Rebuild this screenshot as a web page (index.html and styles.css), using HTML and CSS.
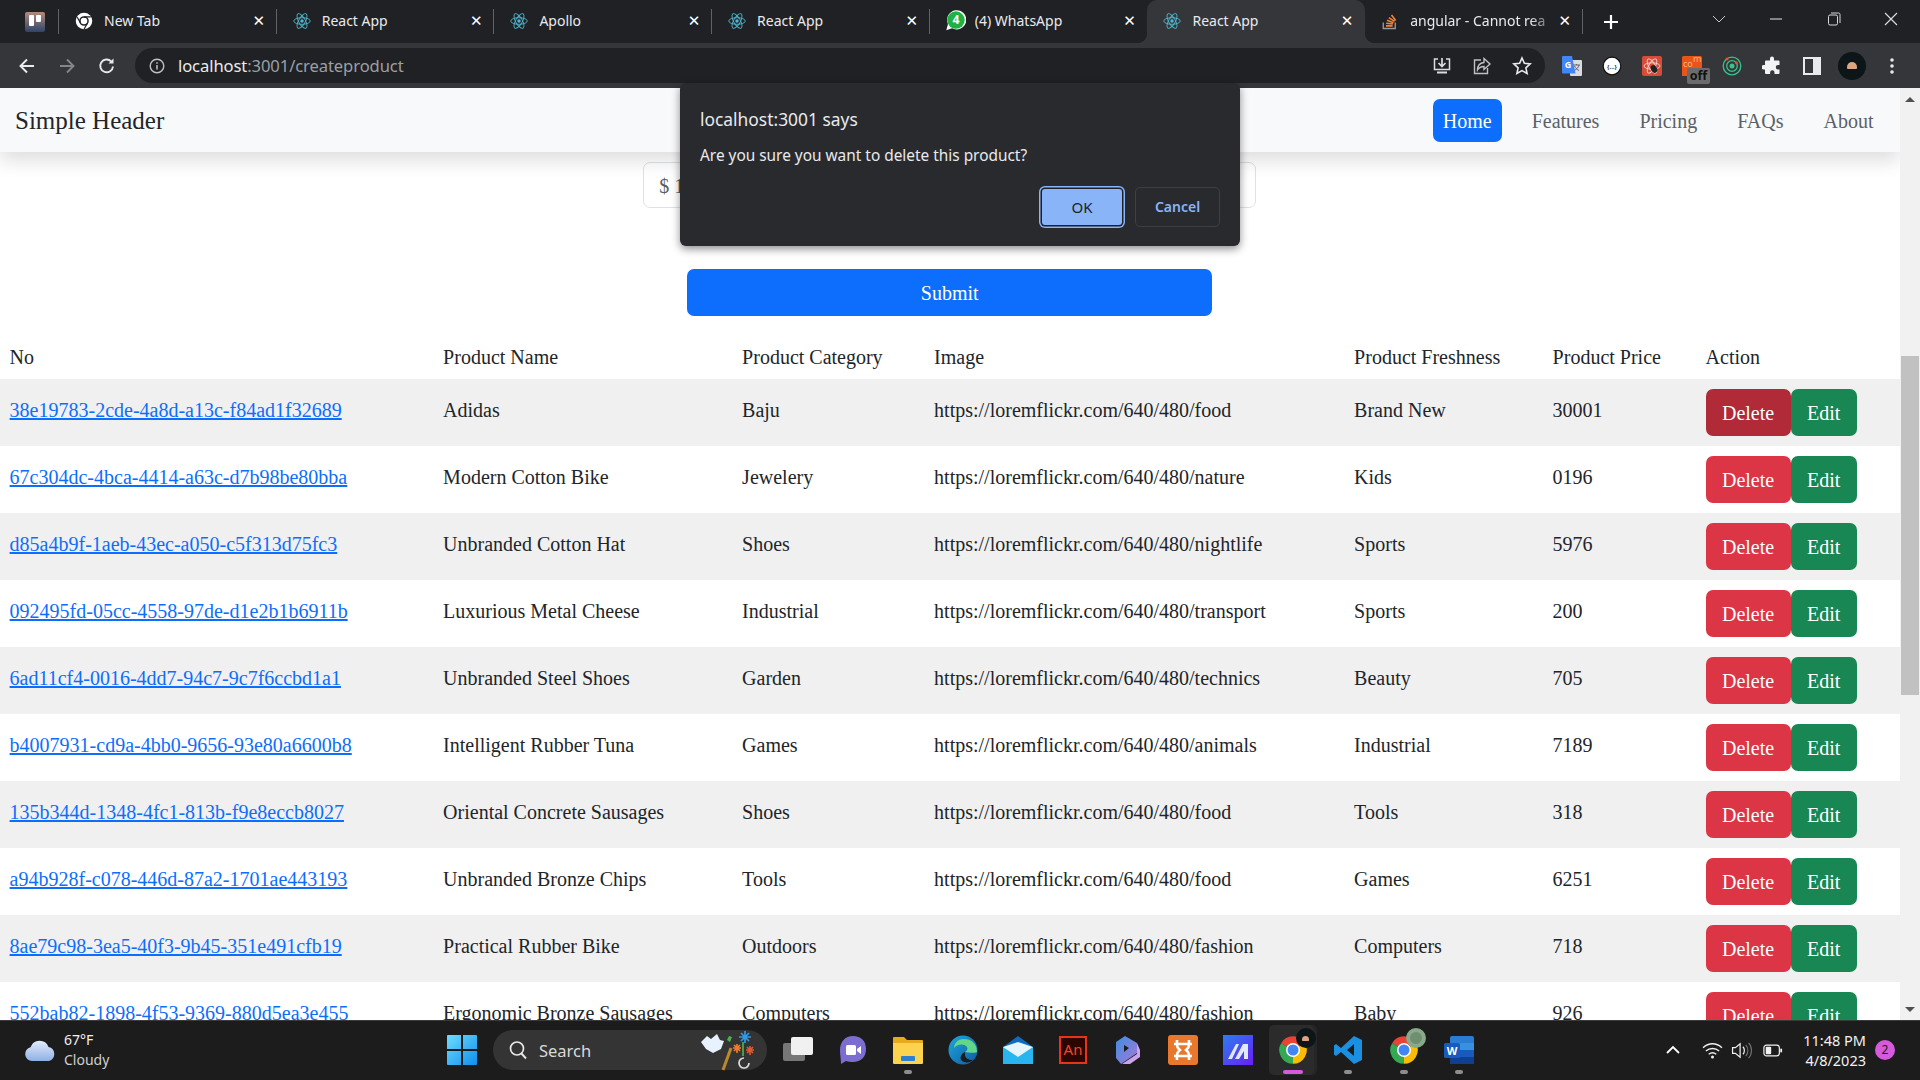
FILE: index.html
```html
<!DOCTYPE html>
<html lang="en">
<head>
<meta charset="utf-8">
<title>React App</title>
<link rel="stylesheet" href="styles.css">
</head>
<body>
<svg class="defs" width="0" height="0" aria-hidden="true">
  <defs>
    <symbol id="react" viewBox="0 0 24 24">
      <circle cx="12" cy="12" r="2.3" fill="#4fb6cf"/>
      <g fill="none" stroke="#4fb6cf" stroke-width="1.2">
        <ellipse cx="12" cy="12" rx="11" ry="4.4"/>
        <ellipse cx="12" cy="12" rx="11" ry="4.4" transform="rotate(60 12 12)"/>
        <ellipse cx="12" cy="12" rx="11" ry="4.4" transform="rotate(120 12 12)"/>
      </g>
    </symbol>
    <symbol id="chrome" viewBox="0 0 24 24">
      <path d="M12 12 21.53 6.5A11 11 0 0 0 2.47 6.5Z" fill="#ea4335"/>
      <path d="M12 12 2.47 6.5A11 11 0 0 0 12 23Z" fill="#34a853"/>
      <path d="M12 12 12 23A11 11 0 0 0 21.53 6.5Z" fill="#fbbc04"/>
      <circle cx="12" cy="12" r="5.6" fill="#fff"/>
      <circle cx="12" cy="12" r="4.4" fill="#4285f4"/>
    </symbol>
  </defs>
</svg>

<header class="tabstrip">
  <div class="tab-pin">
    <svg class="ic20" viewBox="0 0 20 20"><defs><linearGradient id="pin" x1="0" y1="0" x2="0" y2="1"><stop offset="0" stop-color="#b58a7c"/><stop offset="1" stop-color="#2f4468"/></linearGradient></defs><rect width="20" height="20" rx="2" fill="url(#pin)"/><rect x="4" y="3" width="5" height="11" rx="1" fill="#fff"/><rect x="11" y="3" width="5" height="7" rx="1" fill="#fff"/></svg>
  </div>
  <div class="tab">
    <svg class="tab-icon" viewBox="0 0 24 24"><circle cx="12" cy="12" r="11" fill="#fff"/><circle cx="12" cy="12" r="5.4" fill="none" stroke="#202124" stroke-width="2"/><path d="M12 6.6h9M7.3 14.7 3 7M16.7 14.7 12 23" stroke="#202124" stroke-width="1.6"/></svg>
    <span class="tab-title">New Tab</span><span class="tab-x">✕</span>
  </div>
  <div class="tab">
    <svg class="tab-icon"><use href="#react"/></svg>
    <span class="tab-title">React App</span><span class="tab-x">✕</span>
  </div>
  <div class="tab">
    <svg class="tab-icon"><use href="#react"/></svg>
    <span class="tab-title">Apollo</span><span class="tab-x">✕</span>
  </div>
  <div class="tab">
    <svg class="tab-icon"><use href="#react"/></svg>
    <span class="tab-title">React App</span><span class="tab-x">✕</span>
  </div>
  <div class="tab tab-before-active">
    <svg class="tab-icon tab-icon-wa" viewBox="0 0 24 24"><path d="M1.5 23 3.4 16A11 11 0 1 1 8 20.9Z" fill="#fff"/><circle cx="12.5" cy="11.5" r="10" fill="#1fb141"/><text class="wa-count" x="12.5" y="16.5" text-anchor="middle">4</text></svg>
    <span class="tab-title">(4) WhatsApp</span><span class="tab-x">✕</span>
  </div>
  <div class="tab tab-active">
    <svg class="tab-icon"><use href="#react"/></svg>
    <span class="tab-title">React App</span><span class="tab-x">✕</span>
  </div>
  <div class="tab tab-last">
    <svg class="tab-icon" viewBox="0 0 24 24"><path d="M3 14v8h16v-8" fill="none" stroke="#9a9a9a" stroke-width="1.8"/><path d="M6.5 18.5h9M6.8 15l9 1M8 11l8.6 3.2M10.5 7.5l7.5 5M14 4l5.6 7.2" stroke="#ef8236" stroke-width="2.2" fill="none"/></svg>
    <span class="tab-title tab-fade">angular - Cannot rea</span><span class="tab-x">✕</span>
  </div>
  <div class="newtab">
    <svg class="ic16" viewBox="0 0 16 16"><path d="M8 1v14M1 8h14" stroke="#fff" stroke-width="2.2"/></svg>
  </div>
  <div class="winctl">
    <svg class="ctl" viewBox="0 0 14 14"><path d="M1 4l6 6 6-6" fill="none" stroke="#c8c8c8" stroke-width="1"/></svg>
    <svg class="ctl" viewBox="0 0 14 14"><path d="M1 7h12" stroke="#d8d8d8" stroke-width="1.1"/></svg>
    <svg class="ctl" viewBox="0 0 14 14"><rect x="1.5" y="3" width="9" height="10" rx="1.5" fill="none" stroke="#d8d8d8"/><path d="M4 1h7.5A1.5 1.5 0 0 1 13 2.5V11" fill="none" stroke="#d8d8d8"/></svg>
    <svg class="ctl" viewBox="0 0 14 14"><path d="M1 1l12 12M13 1 1 13" stroke="#e0e0e0" stroke-width="1.1"/></svg>
  </div>
</header>

<nav class="toolbar">
  <div class="navbtns">
    <span class="tbtn"><svg class="ic20" viewBox="0 0 20 20"><path d="M17 10H4M10 3.5 3.5 10l6.5 6.5" fill="none" stroke="#e8eaed" stroke-width="1.9"/></svg></span>
    <span class="tbtn"><svg class="ic20" viewBox="0 0 20 20"><path d="M3 10h13M10 3.5l6.5 6.5-6.5 6.5" fill="none" stroke="#84868a" stroke-width="1.9"/></svg></span>
    <span class="tbtn"><svg class="ic20" viewBox="0 0 20 20"><path d="M16 10.5A6.4 6.4 0 1 1 14.2 5.400" fill="none" stroke="#e8eaed" stroke-width="1.9"/><path d="M16.500 2.500v5h-5Z" fill="#e8eaed"/></svg></span>
  </div>
  <div class="omnibox">
    <svg class="ic16" viewBox="0 0 16 16"><circle cx="8" cy="8" r="6.800" fill="none" stroke="#bdc1c6" stroke-width="1.400"/><path d="M8 7v4.500M8 4.300v1.500" stroke="#bdc1c6" stroke-width="1.500"/></svg>
    <span class="url"><span class="url-host">localhost</span>:3001/createproduct</span>
    <span class="omni-actions">
      <span class="tbtn"><svg class="ic20" viewBox="0 0 20 20"><path d="M6 3H2.500v10.500h15V3H14" fill="none" stroke="#dadce0" stroke-width="1.500"/><path d="M10 2v8M6.500 7l3.500 3.500L13.500 7" fill="none" stroke="#dadce0" stroke-width="1.700"/><path d="M5 16.500h10" stroke="#dadce0" stroke-width="2"/></svg></span>
      <span class="tbtn"><svg class="ic20" viewBox="0 0 20 20"><path d="M9 4H2.500v13.500h13V12" fill="none" stroke="#bdc1c6" stroke-width="1.400"/><path d="M12 2.500 18 8l-6 5.500V10.500c-3 0-5 1-6.500 3.500 0-4 2.500-7 6.500-7.500Z" fill="none" stroke="#bdc1c6" stroke-width="1.400"/></svg></span>
      <span class="tbtn"><svg class="ic20" viewBox="0 0 20 20"><path d="M10 2l2.400 5.300 5.800.6-4.300 3.900 1.200 5.700L10 14.600 4.900 17.500l1.200-5.700L1.800 7.900l5.800-.6Z" fill="none" stroke="#e8eaed" stroke-width="1.600"/></svg></span>
    </span>
  </div>
  <div class="extensions">
    <span class="tbtn"><svg class="ic20" viewBox="0 0 20 20"><rect x="8" y="4" width="12" height="16" rx="1" fill="#dadce0"/><path d="M11 9h7M14.500 8v1M17 9c-.5 2.500-2.500 4.500-5 5.500M12.500 10c1 2 2.500 3.500 4.500 4.500" stroke="#5f6368" fill="none"/><path d="M0 1a1 1 0 0 1 1-1h9l3.500 17.500H1a1 1 0 0 1-1-1Z" fill="#4285f4"/><text class="gt" x="6" y="11.500" text-anchor="middle">G</text></svg></span>
    <span class="tbtn"><svg class="ic20" viewBox="0 0 20 20"><circle cx="10" cy="10" r="8.800" fill="#fff" stroke="#111" stroke-width="1.200"/><text class="curl" x="10" y="12.500" text-anchor="middle">{...}</text></svg></span>
    <span class="tbtn"><svg class="ic20" viewBox="0 0 20 20"><rect width="20" height="20" rx="2" fill="#d64c38"/><g fill="none" stroke="#f6d5cf" stroke-width=".9"><ellipse cx="10" cy="10" rx="8" ry="3.200"/><ellipse cx="10" cy="10" rx="8" ry="3.200" transform="rotate(60 10 10)"/><ellipse cx="10" cy="10" rx="8" ry="3.200" transform="rotate(120 10 10)"/></g><ellipse cx="12" cy="13" rx="3" ry="4" fill="#222" transform="rotate(-30 12 13)"/></svg></span>
    <span class="tbtn ext-com"><svg class="ic20" viewBox="0 0 20 20"><rect width="20" height="21" rx="1.500" fill="#e8541a"/><text class="comtxt" x="1" y="11">co</text><text class="comtxt" x="11" y="6">m</text></svg><span class="off-badge">off</span></span>
    <span class="tbtn"><svg class="ic20" viewBox="0 0 20 20"><circle cx="10" cy="10" r="8.800" fill="none" stroke="#35c48d" stroke-width="1.300"/><circle cx="10" cy="10" r="5.300" fill="none" stroke="#35c48d" stroke-width="1.300"/><circle cx="10" cy="10" r="2.500" fill="#35c48d"/><circle cx="5" cy="3" r="1.500" fill="#e8541a"/><circle cx="14.500" cy="7" r="1.400" fill="#e8541a"/></svg></span>
    <span class="tbtn"><svg class="ic20" viewBox="0 0 20 20"><path d="M8 2.500a2 2 0 0 1 4 0V4.500h4.500a1 1 0 0 1 1 1V9h-1.500a2.200 2.200 0 0 0 0 4.400h1.500v3.600a1 1 0 0 1-1 1H12.500v-1.500a2.200 2.200 0 0 0-4.400 0V18H4a1 1 0 0 1-1-1v-3.500H1.500a2.200 2.200 0 0 1 0-4.400H3V5.500a1 1 0 0 1 1-1h4Z" fill="#f1f3f4"/></svg></span>
    <span class="tbtn"><svg class="ic20" viewBox="0 0 20 20"><rect x="2" y="2" width="16" height="16" fill="none" stroke="#e8eaed" stroke-width="2"/><rect x="11" y="2" width="7" height="16" fill="#e8eaed"/></svg></span>
    <span class="tbtn"><span class="avatar"><span class="avatar-face"></span></span></span>
    <span class="tbtn"><svg class="ic20" viewBox="0 0 20 20"><circle cx="10" cy="4" r="1.800" fill="#e8eaed"/><circle cx="10" cy="10" r="1.800" fill="#e8eaed"/><circle cx="10" cy="16" r="1.800" fill="#e8eaed"/></svg></span>
  </div>
</nav>

<main class="viewport">
  <div class="page">
    <div class="site-header">
      <span class="brand">Simple Header</span>
      <ul class="pills">
        <li class="pill pill-on">Home</li>
        <li class="pill">Features</li>
        <li class="pill">Pricing</li>
        <li class="pill">FAQs</li>
        <li class="pill">About</li>
      </ul>
    </div>
    <form class="product-form">
      <div class="price-input">$ 10000</div>
      <div class="submit-btn">Submit</div>
    </form>
    <table class="products">
      <colgroup>
        <col class="c-no"><col class="c-name"><col class="c-cat"><col class="c-img"><col class="c-fresh"><col class="c-price"><col class="c-act">
      </colgroup>
      <thead>
        <tr><th>No</th><th>Product Name</th><th>Product Category</th><th>Image</th><th>Product Freshness</th><th>Product Price</th><th>Action</th></tr>
      </thead>
      <tbody>
        <tr><td><a href="#">38e19783-2cde-4a8d-a13c-f84ad1f32689</a></td><td>Adidas</td><td>Baju</td><td>https://loremflickr.com/640/480/food</td><td>Brand New</td><td>30001</td><td class="acts"><span class="btn del del-hover">Delete</span><span class="btn edit">Edit</span></td></tr>
        <tr><td><a href="#">67c304dc-4bca-4414-a63c-d7b98be80bba</a></td><td>Modern Cotton Bike</td><td>Jewelery</td><td>https://loremflickr.com/640/480/nature</td><td>Kids</td><td>0196</td><td class="acts"><span class="btn del">Delete</span><span class="btn edit">Edit</span></td></tr>
        <tr><td><a href="#">d85a4b9f-1aeb-43ec-a050-c5f313d75fc3</a></td><td>Unbranded Cotton Hat</td><td>Shoes</td><td>https://loremflickr.com/640/480/nightlife</td><td>Sports</td><td>5976</td><td class="acts"><span class="btn del">Delete</span><span class="btn edit">Edit</span></td></tr>
        <tr><td><a href="#">092495fd-05cc-4558-97de-d1e2b1b6911b</a></td><td>Luxurious Metal Cheese</td><td>Industrial</td><td>https://loremflickr.com/640/480/transport</td><td>Sports</td><td>200</td><td class="acts"><span class="btn del">Delete</span><span class="btn edit">Edit</span></td></tr>
        <tr><td><a href="#">6ad11cf4-0016-4dd7-94c7-9c7f6ccbd1a1</a></td><td>Unbranded Steel Shoes</td><td>Garden</td><td>https://loremflickr.com/640/480/technics</td><td>Beauty</td><td>705</td><td class="acts"><span class="btn del">Delete</span><span class="btn edit">Edit</span></td></tr>
        <tr><td><a href="#">b4007931-cd9a-4bb0-9656-93e80a6600b8</a></td><td>Intelligent Rubber Tuna</td><td>Games</td><td>https://loremflickr.com/640/480/animals</td><td>Industrial</td><td>7189</td><td class="acts"><span class="btn del">Delete</span><span class="btn edit">Edit</span></td></tr>
        <tr><td><a href="#">135b344d-1348-4fc1-813b-f9e8eccb8027</a></td><td>Oriental Concrete Sausages</td><td>Shoes</td><td>https://loremflickr.com/640/480/food</td><td>Tools</td><td>318</td><td class="acts"><span class="btn del">Delete</span><span class="btn edit">Edit</span></td></tr>
        <tr><td><a href="#">a94b928f-c078-446d-87a2-1701ae443193</a></td><td>Unbranded Bronze Chips</td><td>Tools</td><td>https://loremflickr.com/640/480/food</td><td>Games</td><td>6251</td><td class="acts"><span class="btn del">Delete</span><span class="btn edit">Edit</span></td></tr>
        <tr><td><a href="#">8ae79c98-3ea5-40f3-9b45-351e491cfb19</a></td><td>Practical Rubber Bike</td><td>Outdoors</td><td>https://loremflickr.com/640/480/fashion</td><td>Computers</td><td>718</td><td class="acts"><span class="btn del">Delete</span><span class="btn edit">Edit</span></td></tr>
        <tr><td><a href="#">552bab82-1898-4f53-9369-880d5ea3e455</a></td><td>Ergonomic Bronze Sausages</td><td>Computers</td><td>https://loremflickr.com/640/480/fashion</td><td>Baby</td><td>926</td><td class="acts"><span class="btn del">Delete</span><span class="btn edit">Edit</span></td></tr>
      </tbody>
    </table>
  </div>
  <aside class="scrollbar">
    <span class="sb-up"></span>
    <span class="sb-track"><span class="sb-thumb"></span></span>
    <span class="sb-down"></span>
  </aside>
</main>

<footer class="taskbar">
  <div class="weather">
    <svg class="cloud" viewBox="0 0 32 24"><defs><linearGradient id="cl" x1="0" y1="0" x2="0" y2="1"><stop offset="0" stop-color="#e4ecfa"/><stop offset="1" stop-color="#8fb0e6"/></linearGradient></defs><path d="M8 23a7 7 0 0 1-1.500-13.800A9.500 9.500 0 0 1 24.500 9 7.200 7.200 0 0 1 25 23Z" fill="url(#cl)"/></svg>
    <div class="weather-text"><span class="temp">67°F</span><span class="cond">Cloudy</span></div>
  </div>
  <svg class="winlogo" viewBox="0 0 30 30"><defs><linearGradient id="win" x1="0" y1="0" x2="1" y2="1"><stop offset="0" stop-color="#6fdcff"/><stop offset="1" stop-color="#0f8fec"/></linearGradient></defs><path d="M0 1a1 1 0 0 1 1-1h13v14H0ZM16 0h13a1 1 0 0 1 1 1v13H16ZM0 16h14v14H1a1 1 0 0 1-1-1ZM16 16h14v13a1 1 0 0 1-1 1H16Z" fill="url(#win)"/></svg>
  <div class="search">
    <svg class="ic20" viewBox="0 0 20 20"><circle cx="9" cy="8.500" r="6.500" fill="none" stroke="#e8e8e8" stroke-width="1.700"/><path d="M13.500 13.500 18 18.500" stroke="#e8e8e8" stroke-width="1.900"/></svg>
    <span class="search-label">Search</span>
    <svg class="doodle" viewBox="0 0 58 44"><path d="M2 14 8 8l4 3 6-5 3 6 4 1-3 8-8 4-7-4Z" fill="#e8f2ff"/><path d="M32 20 24 42" stroke="#b98a2c" stroke-width="3"/><path d="M28 12l2-4 3 1-2 5Z" fill="#4caf50"/><g stroke-width="1.700" fill="none"><path d="M46 3v12M40 9h12M42 5l8 8M50 5l-8 8" stroke="#2f9be6"/><path d="M38 16v9M34 20h8M35 17l6 6M41 17l-6 6" stroke="#f07b2c"/><path d="M51 18v9M47 22h8M48 19l6 6M54 19l-6 6" stroke="#e2562f"/><path d="M44 14v14" stroke="#4caf50"/></g><path d="M50 35a5 5 0 1 1-5-5" fill="none" stroke="#ddd" stroke-width="1.700"/></svg>
  </div>
  <div class="apps">
    <span class="app"><svg class="ic30" viewBox="0 0 30 30"><rect x="0" y="8" width="22" height="18" rx="2" fill="#777"/><rect x="8" y="2" width="22" height="18" rx="2" fill="#f1f1f1"/></svg></span>
    <span class="app"><svg class="ic30" viewBox="0 0 30 30"><path d="M15 1C7 1 2 7 2 15c0 5 1 9 1 14l5-3c2 .8 4 1 7 1 8 0 13-5 13-13S23 1 15 1Z" fill="#7c6dd0"/><rect x="8" y="10" width="10" height="10" rx="1.500" fill="#fff"/><path d="M19 14l4-3v8l-4-3Z" fill="#fff"/></svg></span>
    <span class="app"><svg class="ic30" viewBox="0 0 30 30"><path d="M0 3a1 1 0 0 1 1-1h10l3 3h15a1 1 0 0 1 1 1v4H0Z" fill="#e8a91f"/><path d="M0 8h30v20a1 1 0 0 1-1 1H1a1 1 0 0 1-1-1Z" fill="#fcd34f"/><rect x="8" y="21" width="14" height="5" rx="1" fill="#2b7ed1"/></svg><i class="dot"></i></span>
    <span class="app"><svg class="ic30" viewBox="0 0 30 30"><defs><linearGradient id="edge" x1="0" y1="0" x2="1" y2="1"><stop offset="0" stop-color="#1ea8d8"/><stop offset="1" stop-color="#0f5aa8"/></linearGradient></defs><circle cx="15" cy="15" r="14.500" fill="url(#edge)"/><path d="M29 17C29 8 23 4 16 4 9 4 6 9 6 13c3-4 10-5 13-1 1 2 0 4-2 5 4 1 12 1 12 0Z" fill="#62d68a"/><path d="M17 17c-4 2-6 6-3 9 3 2 8 2 11-1-4 0-9-1-8-8Z" fill="#1c1c1c"/></svg></span>
    <span class="app"><svg class="ic30" viewBox="0 0 30 30"><path d="M0 12 15 1l15 11v17H0Z" fill="#0f6cbd"/><path d="M0 12h30v17H0Z" fill="#29b6f0"/><path d="M0 12l15 10 15-10-15-5Z" fill="#e8f4fb"/></svg></span>
    <span class="app"><span class="an-tile">An</span></span>
    <span class="app"><svg class="ic30" viewBox="0 0 30 30"><defs><linearGradient id="bing" x1="0" y1="0" x2="1" y2="1"><stop offset="0" stop-color="#3d8fe0"/><stop offset="1" stop-color="#a678d8"/></linearGradient></defs><path d="M12 1l12 7v10L8 29l-5-6V7Z" fill="url(#bing)"/><path d="M11 10l5 3-5 4Z" fill="#1c1c1c"/><path d="M24 8l3 7v7l-10 7H9l15-10Z" fill="#c9a5ec"/></svg></span>
    <span class="app"><svg class="ic30" viewBox="0 0 30 30"><rect width="30" height="30" rx="3" fill="#e8782c"/><path d="M9 5v5c0 3 2 4 3 5-1 1-3 2-3 5v5M21 5v5c0 3-2 4-3 5 1 1 3 2 3 5v5M6 9h18M6 21h18" fill="none" stroke="#fff" stroke-width="2.600"/></svg></span>
    <span class="app"><svg class="ic30" viewBox="0 0 30 30"><defs><linearGradient id="mm" x1="0" y1="0" x2="1" y2="1"><stop offset="0" stop-color="#2a7ff0"/><stop offset="1" stop-color="#6a1df5"/></linearGradient></defs><rect width="30" height="30" fill="url(#mm)"/><path d="M5 24 13 9h3L9 24ZM12 24 20 9h5v15h-4v-8l-5 8Z" fill="#dfe9ff"/></svg></span>
    <span class="app app-on"><svg class="ic30 app-svg" viewBox="0 0 24 24"><use href="#chrome"/></svg><span class="mini-avatar"><span class="avatar-face mini-face"></span></span><i class="dot dot-on"></i></span>
    <span class="app"><svg class="ic30" viewBox="0 0 30 30"><path d="M21 1 29 5v20l-8 4L8 17l-5 4-2-1.500V10.500L3 9l5 4ZM21 9l-7 6 7 6Z" fill="#1b8fe0" fill-rule="evenodd"/></svg><i class="dot"></i></span>
    <span class="app"><svg class="ic30" viewBox="0 0 24 24"><use href="#chrome"/></svg><span class="mini-avatar mini-green"></span><i class="dot"></i></span>
    <span class="app"><svg class="ic30" viewBox="0 0 30 30"><rect x="6" y="1" width="24" height="28" rx="2" fill="#2b7cd3"/><rect x="6" y="8" width="24" height="7" fill="#41a5ee" opacity=".5"/><rect x="6" y="15" width="24" height="7" fill="#185abd"/><rect x="6" y="22" width="24" height="7" fill="#103f91"/><rect x="0" y="8" width="16" height="15" rx="1.500" fill="#185abd"/><text class="wordw" x="8" y="20" text-anchor="middle">W</text></svg><i class="dot"></i></span>
  </div>
  <div class="tray">
    <svg class="ic16" viewBox="0 0 16 16"><path d="M2 11l6-6 6 6" fill="none" stroke="#fff" stroke-width="1.800"/></svg>
    <svg class="tray-wifi" viewBox="0 0 22 18"><path d="M1 6c6-5.500 14-5.500 20 0M4 9.500c4-3.500 10-3.500 14 0M7 13c2.500-2 5.500-2 8 0" fill="none" stroke="#f0f0f0" stroke-width="1.500"/><circle cx="11" cy="16" r="1.600" fill="#f0f0f0"/></svg>
    <svg class="tray-vol" viewBox="0 0 22 18"><path d="M1 6h3l5-4v14l-5-4H1Z" fill="none" stroke="#f0f0f0" stroke-width="1.300"/><path d="M12 5c2 2 2 6 0 8" fill="none" stroke="#f0f0f0" stroke-width="1.300"/><path d="M15 3c3 3 3 9 0 12M18 1c4 4 4 12 0 16" fill="none" stroke="#777" stroke-width="1.100"/></svg>
    <svg class="tray-bat" viewBox="0 0 22 14"><rect x="1" y="1" width="17" height="12" rx="3" fill="none" stroke="#f0f0f0" stroke-width="1.300"/><rect x="3" y="3" width="6" height="8" rx="1" fill="#f0f0f0"/><rect x="19" y="5" width="2" height="4" fill="#f0f0f0"/></svg>
    <div class="clock"><span>11:48 PM</span><span>4/8/2023</span></div>
    <span class="notif">2</span>
  </div>
</footer>

<div class="alert" role="dialog">
  <div class="alert-title">localhost:3001 says</div>
  <div class="alert-msg">Are you sure you want to delete this product?</div>
  <div class="alert-actions">
    <span class="alert-ok">OK</span>
    <span class="alert-cancel">Cancel</span>
  </div>
</div>
</body>
</html>
```
FILE: styles.css
```css
* { box-sizing: border-box; }
html, body { margin: 0; padding: 0; }
body {
  width: 1920px;
  height: 1080px;
  overflow: hidden;
  display: flex;
  flex-direction: column;
  position: relative;
  font-family: "Liberation Serif", serif;
  color: #212529;
  background: #fff;
}
.defs { position: absolute; }
svg { display: block; flex: none; }
.ic16 { width: 16px; height: 16px; }
.ic20 { width: 20px; height: 20px; }
.ic30 { width: 30px; height: 30px; }

/* tab strip */
.tabstrip {
  height: 43px;
  flex: none;
  display: flex;
  align-items: stretch;
  background: #202124;
  font-family: "Noto Sans", sans-serif;
  font-size: 14px;
  color: #e8eaed;
}
.tab-pin {
  width: 59px;
  display: flex;
  align-items: center;
  padding-left: 25px;
  margin: 9px 0;
  border-right: 1px solid #5f6368;
}
.tab {
  width: 217.7px;
  display: flex;
  align-items: center;
  padding: 0 10px 2px 16px;
  position: relative;
  flex: none;
}
.tab::after {
  content: "";
  position: absolute;
  right: 0;
  top: 9px;
  bottom: 9px;
  width: 1px;
  background: #5f6368;
}
.tab-before-active::after, .tab-active::after { display: none; }
.tab-icon { width: 18px; height: 18px; margin-right: 11px; }
.tab-icon-wa { width: 21px; height: 21px; margin: 0 9px 0 -1px; }
.tab-title { flex: 1; white-space: nowrap; overflow: hidden; }
.tab-fade { -webkit-mask-image: linear-gradient(90deg, #000 82%, transparent 100%); mask-image: linear-gradient(90deg, #000 82%, transparent 100%); }
.tab-x { width: 16px; text-align: center; font-size: 15px; color: #fff; font-family: "DejaVu Sans", sans-serif; font-weight: 700; }
.tab-active {
  background: #35363a;
  border-radius: 10px 10px 0 0;
  margin-top: 0;
}
.tab-active::before {
  content: "";
  position: absolute;
  left: -10px;
  bottom: 0;
  width: 10px;
  height: 10px;
  background: radial-gradient(circle at 0 0, #202124 10px, #35363a 10.5px);
}
.tab-last::before {
  content: "";
  position: absolute;
  left: 0;
  bottom: 0;
  width: 10px;
  height: 10px;
  background: radial-gradient(circle at 100% 0, #202124 10px, #35363a 10.5px);
}
.wa-count { font: 700 14px "Noto Sans", sans-serif; fill: #fff; }
.newtab { width: 56px; display: flex; align-items: center; justify-content: center; }
.winctl { flex: 1; display: flex; align-items: center; justify-content: flex-end; padding: 0 22px 5px 0; gap: 43.500px; }
.ctl { width: 14px; height: 14px; }

/* toolbar */
.toolbar {
  height: 45px;
  flex: none;
  display: flex;
  align-items: center;
  background: #35363a;
  padding: 0 8px 0 7px;
  font-family: "Noto Sans", sans-serif;
}
.navbtns { display: flex; width: 121px; }
.tbtn { width: 40px; height: 35px; display: flex; align-items: center; justify-content: center; position: relative; flex: none; }
.omnibox {
  flex: 1;
  height: 35px;
  margin-left: 7px;
  background: #202124;
  border-radius: 18px;
  display: flex;
  align-items: center;
  padding: 0 3px 0 14px;
}
.url { margin-left: 13px; font-size: 16.600px; color: #9aa0a6; flex: 1; white-space: nowrap; letter-spacing: -.1px; }
.url-host { color: #e8eaed; }
.omni-actions { display: flex; }
.extensions { display: flex; margin-left: 7px; }
.gt { font: 700 9px "Noto Sans", sans-serif; fill: #fff; }
.curl { font: 700 6px "Noto Sans", sans-serif; fill: #333; }
.comtxt { font: 9px "Noto Sans", sans-serif; fill: #ffb07a; }
.off-badge {
  position: absolute;
  left: 15px;
  top: 20px;
  width: 23px;
  height: 16px;
  background: #6b6b6b;
  border-radius: 2px;
  color: #111;
  font-size: 12.500px;
  font-weight: 700;
  line-height: 15px;
  text-align: center;
}
.avatar { width: 28px; height: 28px; border-radius: 50%; background: #0c1518; display: flex; align-items: center; justify-content: center; }
.avatar-face { display: block; width: 10px; height: 7px; border-radius: 5px 5px 1px 1px; background: #dba585; }

/* page */
.viewport { flex: none; height: 932px; display: flex; overflow: hidden; }
.page { width: 1899.500px; flex: none; overflow: hidden; font-size: 20px; }
.site-header {
  height: 64px;
  background: #f8f9fa;
  display: flex;
  align-items: center;
  justify-content: space-between;
  padding: 0 16px 0 15px;
  box-shadow: 0 9px 18px rgba(0, 0, 0, .13);
  position: relative;
}
.brand { font-size: 25px; color: #212529; padding-top: 2px; }
.pills { display: flex; gap: 20px; list-style: none; margin: 0; padding: 0; }
.pill { height: 43px; line-height: 44px; padding: 0 10px; color: #5b6167; border-radius: 7px; }
.pill-on { background: #0d6efd; color: #fff; }
.product-form { display: flex; flex-direction: column; align-items: center; padding-top: 10px; }
.price-input {
  width: 613px;
  height: 46px;
  border: 1px solid #dee2e6;
  border-radius: 7px;
  padding: 0 15px;
  line-height: 46px;
  color: #595c5f;
  background: #fff;
}
.submit-btn {
  width: 525px;
  height: 47px;
  margin-top: 61px;
  line-height: 48px;
  text-align: center;
  color: #fff;
  background: #0d6efd;
  border-radius: 7px;
}
.products { width: 100%; margin-top: 20px; border-collapse: collapse; table-layout: fixed; }
.c-no { width: 433.500px; }
.c-name { width: 299px; }
.c-cat { width: 192px; }
.c-img { width: 420px; }
.c-fresh { width: 198.500px; }
.c-price { width: 153px; }
.products th { height: 43px; font-weight: 400; text-align: left; padding: 0 9.600px; }
.products td { height: 67px; padding: 17px 9.600px 0; vertical-align: top; white-space: nowrap; line-height: 29px; }
.products tbody tr:nth-child(odd) { background: #f0f0f0; }
.products a { color: #0d6efd; }
.products td.acts { padding: 10px 0 0 9.600px; }
.btn { display: inline-block; height: 47px; line-height: 49px; padding: 0 16.400px; color: #fff; border-radius: 7px; vertical-align: top; }
.del { background: #dc3545; }
.del-hover { background: #b02a37; }
.edit { background: #198754; }

/* scrollbar */
.scrollbar { flex: 1; background: #f1f1f1; display: flex; flex-direction: column; align-items: stretch; }
.sb-up, .sb-down { height: 21px; flex: none; position: relative; }
.sb-up::after, .sb-down::after {
  content: "";
  position: absolute;
  left: 5px;
  border-left: 5px solid transparent;
  border-right: 5px solid transparent;
}
.sb-up::after { top: 9px; border-bottom: 5px solid #505050; }
.sb-down::after { top: 8px; border-top: 5px solid #505050; }
.sb-track { flex: 1; padding: 247px 1px 0 1px; }
.sb-thumb { display: block; height: 339px; background: #c1c1c1; }

/* taskbar */
.taskbar {
  height: 60px;
  flex: none;
  display: flex;
  align-items: center;
  background: #1c1c1c;
  border-top: 1px solid #3a3a3a;
  padding-bottom: 1px;
  color: #f2f2f2;
  font-family: "Noto Sans", sans-serif;
  position: relative;
}
.weather { width: 447px; display: flex; align-items: center; padding-left: 24px; }
.cloud { width: 32px; height: 24px; }
.weather-text { margin-left: 8px; display: flex; flex-direction: column; font-size: 14px; line-height: 20px; }
.cond { color: #cfcfcf; }
.winlogo { width: 30px; height: 30px; }
.search {
  width: 274px;
  height: 40px;
  margin-left: 16px;
  background: #343434;
  border-radius: 20px;
  display: flex;
  align-items: center;
  padding: 0 10px 0 15px;
}
.search-label { margin-left: 11px; font-size: 16.500px; color: #d9d9d9; flex: 1; }
.doodle { width: 58px; height: 44px; }
.apps { display: flex; margin-left: 3px; }
.app { width: 55.100px; height: 50px; display: flex; align-items: center; justify-content: center; position: relative; }
.app-on::before { content: ""; position: absolute; top: 0; bottom: 0; left: 3px; right: 7px; background: #2b2b2b; border-radius: 5px; box-shadow: 3px 0 0 #262626; }
.app-svg { position: relative; }
.dot { position: absolute; left: 50%; bottom: 1px; width: 8px; height: 4px; margin-left: -4px; border-radius: 2px; background: #8e8e8e; }
.dot-on { width: 20px; margin-left: -10px; background: #d65bdc; }
.an-tile {
  width: 28px;
  height: 28px;
  background: #2b0500;
  border: 2px solid #e8321a;
  color: #f0462a;
  font-size: 15px;
  line-height: 23px;
  text-align: center;
}
.mini-avatar { position: absolute; left: 30px; top: 3px; width: 20px; height: 20px; border-radius: 50%; background: #0c1518; display: flex; align-items: center; justify-content: center; }
.mini-face { width: 7px; height: 5px; }
.mini-green { background: #6f8f70; border: 4px solid #8aa88a; }
.wordw { font: 700 11px "Noto Sans", sans-serif; fill: #fff; }
.tray { margin-left: auto; display: flex; align-items: center; padding-right: 25px; }
.tray-wifi { width: 21px; height: 17px; margin-left: 21px; }
.tray-vol { width: 22px; height: 17px; margin-left: 8px; }
.tray-bat { width: 20px; height: 13px; margin-left: 10px; }
.clock { margin-left: 20px; display: flex; flex-direction: column; align-items: flex-end; font-size: 14.500px; line-height: 20px; }
.notif { width: 20px; height: 20px; margin-left: 9px; border-radius: 50%; background: #d65bdc; color: #1c1c1c; font-size: 12px; line-height: 20px; text-align: center; }

/* alert */
.alert {
  position: absolute;
  left: 680px;
  top: 83px;
  width: 560px;
  height: 163px;
  background: #292a2d;
  border-radius: 6px;
  box-shadow: 0 3px 8px rgba(0, 0, 0, .45);
  color: #e8eaed;
  font-family: "Noto Sans", sans-serif;
  padding: 24px 20px 0;
}
.alert-title { font-size: 17.400px; line-height: 24px; }
.alert-msg { margin-top: 13px; font-size: 15.400px; line-height: 24px; }
.alert-actions { display: flex; justify-content: flex-end; align-items: center; gap: 13px; margin-top: 19px; font-size: 14px; font-weight: 600; }
.alert-ok {
  width: 80px;
  height: 36px;
  line-height: 36px;
  text-align: center;
  background: #8ab4f8;
  color: #202124;
  font-weight: 400;
  font-size: 15px;
  border-radius: 3px;
  box-shadow: 0 0 0 1.500px #202124, 0 0 0 3px #8ab4f8;
}
.alert-cancel {
  width: 85px;
  height: 40px;
  line-height: 38px;
  text-align: center;
  color: #8ab4f8;
  border: 1px solid #3c4043;
  border-radius: 5px;
}
```
